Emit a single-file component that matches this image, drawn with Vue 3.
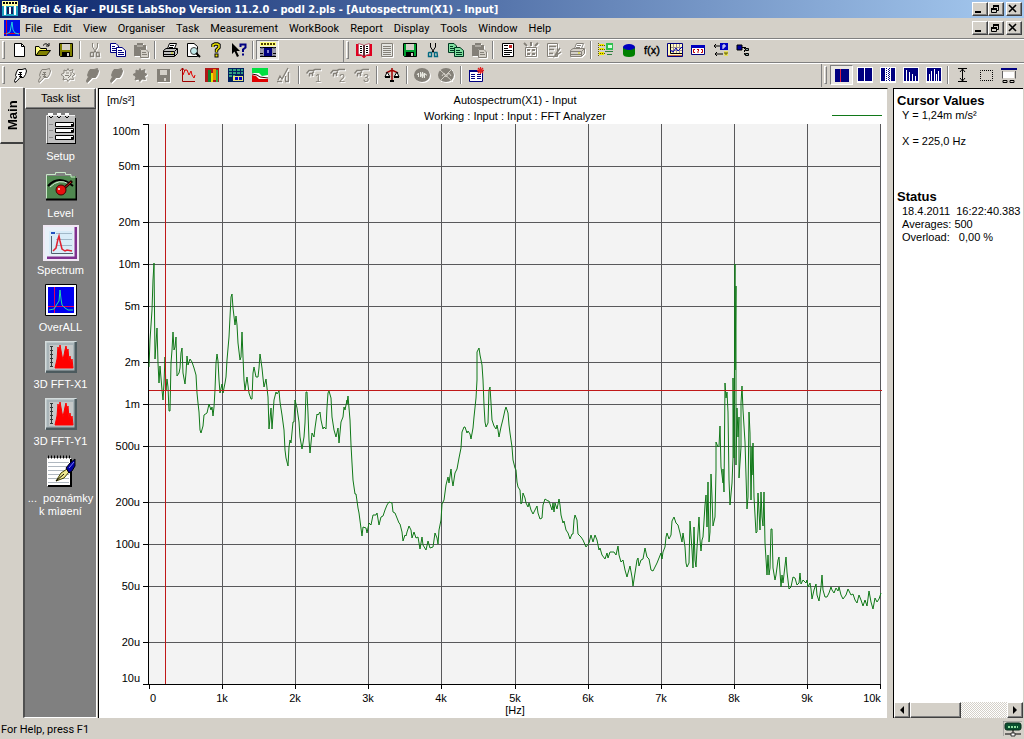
<template>
  <div class="window">

    <header class="titlebar">
      <svg class="icon" viewBox="0 0 16 16" v-html="icons.app"></svg>
      <h1>Brüel &amp; Kjar - PULSE LabShop Version 11.2.0 - podl 2.pls - [Autospectrum(X1) - Input]</h1>
      <div class="win-buttons">
        <button v-for="b in winButtons" :key="b" :class="['win-btn', b]" :aria-label="b">
          <svg viewBox="0 0 12 10" v-html="icons[b]"></svg>
        </button>
      </div>
    </header>

    <nav class="menubar">
      <svg class="icon" viewBox="0 0 16 16" v-html="icons.doc"></svg>
      <button v-for="m in menus" :key="m" class="menu-item">{{ m }}</button>
      <div class="win-buttons">
        <button v-for="b in winButtons" :key="b" :class="['win-btn', b]" :aria-label="b">
          <svg viewBox="0 0 12 10" v-html="icons[b]"></svg>
        </button>
      </div>
    </nav>

    <div v-for="(row, r) in toolbars" :key="r" :class="['toolbar', 'row-' + r]">
      <div v-for="(bar, i) in row" :key="i" class="bar">
        <span class="grip"></span>
        <template v-for="(name, k) in bar" :key="k">
          <span v-if="name === '|'" class="sep"></span>
          <button
            v-else
            :class="['tool', { off: disabled.includes(name), pressed: pressed.includes(name) }]"
            :aria-label="name"
          >
            <svg class="icon" viewBox="0 0 16 16" v-html="icons[name]"></svg>
          </button>
        </template>
      </div>
    </div>

    <main class="content">

      <div class="tabs">
        <button class="tab">Main</button>
      </div>

      <aside class="tasks">
        <button class="task-head">Task list</button>
        <button
          v-for="t in tasks"
          :key="t.label"
          :class="['task', { active: t.label === 'Spectrum' }]"
        >
          <svg class="task-icon" viewBox="0 0 32 32" v-html="icons[t.icon]"></svg>
          <span>{{ t.label }}</span>
        </button>
      </aside>

      <section class="pane chart-pane">
        <svg class="chart" viewBox="0 0 788 629">
          <text x="8" y="15">[m/s²]</text>
          <text x="416" y="15" text-anchor="middle">Autospectrum(X1) - Input</text>
          <text x="416" y="31" text-anchor="middle">Working : Input : Input : FFT Analyzer</text>
          <rect class="legend" x="733" y="26" width="50" height="1" />

          <g transform="translate(50 35)">
            <rect width="731" height="560" fill="#f3f3f3" />
            <g v-for="y in yTicks" :key="y.label">
              <path v-if="y.grid" class="grid" :d="`M0 ${y.pos}.5H731`" />
              <path class="axis" :d="`M-6 ${y.pos}.5H0`" />
              <text x="-9" :y="y.text" text-anchor="end">{{ y.label }}</text>
            </g>
            <g v-for="x in xTicks" :key="x.label">
              <path v-if="x.grid" class="grid" :d="`M${x.pos}.5 0V560`" />
              <path class="axis" :d="`M${x.pos}.5 560V565`" />
              <text :x="x.text" y="578" text-anchor="middle">{{ x.label }}</text>
            </g>
            <path class="axis" d="M-0.5 0V560.5H732" />
            <polyline class="trace" :points="trace" />
            <rect class="cursor" x="16" y="0" width="1" height="560" />
            <rect class="cursor" x="0" y="266" width="733" height="1" />
            <text x="366" y="590" text-anchor="middle">[Hz]</text>
          </g>
        </svg>
      </section>

      <section class="pane values-pane">
        <div class="values">
          <h2>Cursor Values</h2>
          <p>Y = 1,24m m/s²</p>
          <p class="x-value">X = 225,0 Hz</p>
          <h2>Status</h2>
          <p>18.4.2011&nbsp; 16:22:40.383</p>
          <p>Averages: 500</p>
          <p>Overload: &nbsp; 0,00 %</p>
        </div>
        <div class="scrollbar">
          <button class="arrow" aria-label="left"><svg viewBox="0 0 8 8"><path d="M6 0V8L2 4Z" /></svg></button>
          <div class="thumb"></div>
          <button class="arrow right" aria-label="right"><svg viewBox="0 0 8 8"><path d="M2 0V8L6 4Z" /></svg></button>
        </div>
      </section>

    </main>

    <footer class="statusbar">
      <span>For Help, press F1</span>
      <svg class="status-icon" viewBox="0 0 20 16">
        <path d="M0 15V0H19" fill="none" stroke="#808080" />
        <path d="M2 4Q2 2 4 2H16Q18 2 18 4V7Q18 9 16 9H4Q2 9 2 7Z" fill="#0a5030" stroke="#062c1a" />
        <path d="M5 6H15" stroke="#8fe0a0" stroke-width="2" stroke-dasharray="2 1" />
        <path d="M10 9V13M2 13H18" stroke="#000" />
        <path d="M8 12H12V15H8Z" fill="#fff" stroke="#333" />
      </svg>
    </footer>

  </div>
</template>

<script setup>
const winButtons = ["minimize", "restore", "close"]

const menus = [
  "File", "Edit", "View", "Organiser", "Task", "Measurement",
  "WorkBook", "Report", "Display", "Tools", "Window", "Help"
]

const toolbars = [
  [
    ["new", "open", "save", "|", "cut", "copy", "paste", "|", "print", "preview", "help", "whats", "|", "organiser"],
    [
      "book", "page", "saveGreen", "cutBlue", "copyGreen", "pasteOff", "|",
      "report", "reportAll", "reportEdit", "printOff", "|",
      "levels", "database", "func", "graph", "calib", "convert", "tree"
    ]
  ],
  [
    [
      "hand", "handOff", "burst", "handDark", "handDark2", "burst2", "saveOff", "autorange",
      "colors", "table", "profile", "sweep", "|", "hand1", "hand2", "hand3", "|",
      "balance", "|", "wave", "waveOff", "|", "properties"
    ],
    ["cursor", "cursor2", "cursorBand", "harmonic", "sideband", "|", "height", "select", "display"]
  ]
]

const disabled = [
  "cut", "paste", "page", "pasteOff", "reportAll", "reportEdit", "printOff", "handOff",
  "burst", "handDark", "handDark2", "burst2", "saveOff", "sweep", "hand1", "hand2", "hand3",
  "wave", "waveOff"
]

const pressed = ["organiser", "cursor"]

const tasks = [
  { icon: "setup", label: "Setup" },
  { icon: "level", label: "Level" },
  { icon: "spectrum", label: "Spectrum" },
  { icon: "overall", label: "OverALL" },
  { icon: "fft", label: "3D FFT-X1" },
  { icon: "fft", label: "3D FFT-Y1" },
  { icon: "notes", label: "...  poznámky k mìøení" }
]

// log axis, 140 px per decade from 100m down to 10u
const levels = [
  ["100m", 0.1], ["50m", 0.05], ["20m", 0.02], ["10m", 0.01], ["5m", 0.005],
  ["2m", 0.002], ["1m", 0.001], ["500u", 0.0005], ["200u", 0.0002],
  ["100u", 0.0001], ["50u", 0.00005], ["20u", 0.00002], ["10u", 0.00001]
]

const yTicks = levels.map(([label, value], i) => {
  const pos = Math.round(140 * Math.log10(0.1 / value))
  const first = i === 0
  const last = i === levels.length - 1
  return {
    label,
    pos,
    grid: !first && !last,
    text: first ? pos + 11 : last ? pos - 2 : pos + 4
  }
})

const xTicks = Array.from({ length: 11 }, (_, k) => {
  const pos = Math.round(73.1 * k)
  return {
    label: k ? k + "k" : "0",
    pos,
    grid: k > 0,
    text: k === 0 ? 4 : k === 10 ? pos - 8 : pos
  }
})

const trace = `
0,243 1,216 3,186 4,156 5,139 6,235 7,219 8,204 9,239 10,259 11,242 13,266 14,276 15,259 16,233 17,266
18,255 19,263 20,287 21,287 22,239 23,226 24,208 25,226 26,223 27,213 28,252 30,249 31,244 32,229 33,224
34,249 36,260 37,249 38,232 39,241 41,235 43,238 45,244 47,251 48,269 49,279 50,288 51,306 52,309 54,302
55,291 58,289 60,280 62,286 63,283 64,292 65,283 66,266 67,239 68,230 69,237 70,256 71,269 73,260 74,269
76,259 77,253 78,236 80,213 81,193 82,173 83,170 84,184 86,201 87,192 88,201 89,219 91,236 92,233 93,208
94,233 95,256 96,266 98,253 100,269 102,275 103,275 104,249 105,243 107,253 109,253 110,244 111,230
113,244 114,254 115,263 117,255 119,273 120,305 122,284 123,305 125,276 127,268 128,270 130,267 131,278
133,291 135,306 136,326 137,334 139,342 140,323 141,316 142,319 144,298 145,298 146,276 148,284 150,298
151,313 153,325 155,313 156,299 157,268 158,268 159,289 160,316 161,329 163,309 165,313 166,304 168,290
169,291 171,288 172,296 174,305 175,303 177,305 178,283 179,269 180,267 182,274 183,293 185,306 187,313
189,304 190,319 192,298 194,293 195,283 196,286 198,276 198,280 199,272 201,296 202,321 203,339 204,356
206,370 207,370 209,384 210,389 213,412 214,403 217,404 218,409 220,399 222,401 224,391 227,391 228,389
230,401 232,393 234,392 236,386 238,381 240,378 243,379 244,388 246,389 248,394 250,399 251,400 253,408
254,417 256,411 257,412 258,408 260,402 262,406 263,414 265,408 267,414 269,413 271,425 273,413 274,421
277,426 279,417 281,424 284,423 286,409 288,414 289,420 290,406 292,396 293,380 295,376 297,361 299,353
300,359 302,345 303,356 304,362 306,349 308,345 310,334 312,324 313,308 315,303 316,303 318,309 319,307
321,310 322,315 324,304 325,293 327,274 328,256 328,228 330,224 331,231 333,241 334,256 335,281 336,298
337,303 339,299 340,266 341,263 342,279 343,296 345,302 347,305 348,301 349,306 350,313 352,303 354,295
356,286 357,283 359,289 360,301 361,309 363,323 364,336 366,344 367,346 368,358 369,363 371,366 372,380
373,378 374,369 376,374 377,379 379,383 380,379 382,386 384,390 386,386 388,382 389,389 391,395 393,394
394,381 396,375 399,377 400,377 402,383 403,386 404,379 405,388 406,379 408,385 410,375 411,381 412,391
414,399 415,397 417,406 419,409 421,415 423,410 424,410 425,396 426,391 428,396 429,410 432,413 434,416
437,423 440,419 442,411 444,418 446,411 448,416 450,426 451,424 453,431 456,435 458,429 459,434 461,428
465,428 467,431 469,422 470,431 472,438 474,436 476,446 478,453 479,449 481,442 483,453 484,462 486,449
488,436 489,434 490,442 492,436 494,435 496,424 498,433 500,435 502,446 504,447 506,443 508,439 510,434
512,429 513,435 514,428 516,423 517,413 518,409 520,415 522,411 523,397 525,393 527,399 529,401 531,409
533,418 534,409 536,423 537,439 538,443 540,439 541,397 543,426 544,444 545,403 546,436 547,443 548,424
550,393 551,416 552,427 553,416 554,413 556,381 557,371 558,403 559,358 560,418 561,408 562,350 563,373
564,402 566,393 567,346 567,318 569,323 570,322 571,302 572,343 574,359 574,345 575,368 576,259 577,274
578,268 579,288 580,356 581,381 583,359 584,334 584,254 585,334 586,140 586,246 587,162 587,341 588,284
589,313 590,293 590,354 592,323 592,279 593,262 594,286 596,318 598,385 599,373 600,288 601,309 602,376
603,323 603,351 604,319 605,373 607,409 608,408 609,369 611,406 612,368 613,393 614,402 615,368 616,419
618,451 619,431 620,451 621,444 622,405 623,405 624,444 626,456 627,451 629,436 630,433 632,463 633,451
634,459 637,433 638,448 640,465 642,463 644,453 646,454 648,461 650,459 651,449 652,460 654,456 657,459
658,456 659,463 661,459 662,465 663,475 665,466 667,460 668,471 670,477 672,463 673,451 674,466 676,473
678,473 680,469 682,463 683,466 685,469 687,464 689,467 690,463 692,471 694,475 697,471 699,465 702,471
704,470 706,476 708,479 710,471 712,476 714,482 716,476 718,482 720,467 722,478 724,485 726,474 728,478
730,475 732,469`

const floppy = (body) =>
  `<path d="M1.5 1.5H14.5V14.5H2.5L1.5 13.5Z" fill="${body}" stroke="#000"/><path d="M4 2H12V8H4Z" fill="#d4d0c8"/><path d="M4 10H12V15H4Z" fill="#000"/><path d="M9 11H11V14H9Z" fill="#d4d0c8"/>`

const pages = (fill, line) =>
  `<path d="M.5 1.5H6L8.5 4V10.5H.5Z" fill="${fill}" stroke="${line}"/><path d="M2 4.5H5M2 6.5H7M2 8.5H6" stroke="${line}"/><path d="M6.5 5.5H12L15.5 8.5V14.5H6.5Z" fill="${fill}" stroke="${line}"/><path d="M8 8.5H12M8 10.5H14M8 12.5H14" stroke="${line}"/>`

const scissors = (blade, ring) =>
  `<path d="M5.5 1V5L9.5 11M10.5 1V5L6.5 11" fill="none" stroke="${blade}"/><path d="M4 10.5H6.5V14.5H3.5V11ZM9.5 10.5H12L12.5 14.5H9.5Z" fill="none" stroke="${ring}" stroke-width="1.4"/>`

const clipboard =
  '<path d="M1 3H4V1H10V3H13V7H7V14H1Z" fill="#848078"/><path d="M4 4H10" stroke="#d4d0c8"/><path d="M7.5 7.5H13L15.5 10V15.5H7.5Z" fill="#d4d0c8" stroke="#848078"/><path d="M9 10.5H13M9 12.5H14" stroke="#848078"/>'

const printer = (line, tray) =>
  `<path d="M5.5 6.5L7.5 1.5H14.5L12.5 6.5" fill="#fff" stroke="${line}"/><path d="M8 3.5H12M7 5.5H11" stroke="${line}"/><path d="M1.5 8.5L4 6.5H15.5V11.5L12.5 14.5H1.5Z" fill="${tray}" stroke="${line}"/><path d="M2 9.5H12.5L15 7M2 12.5H12M12.5 10V14" fill="none" stroke="${line}"/><path d="M9 11H11" stroke="#dd0"/>`

const hand = (fill, line) =>
  `<path d="M6 2.5H10L13.5 1.5L14.5 4L13.5 7.5L11.5 10.5H8L5.5 13.5L3 15.5L2.5 13.5L4.5 10L3.5 8.5L4.5 5Z" fill="${fill}" stroke="${line}"/><path d="M7 5.5H10M6 7.5H10M7 9.5H10M8.5 5V10" stroke="${line}" fill="none"/>`

const handNum = (n) =>
  `<path d="M0.5 6.5L3 3.5H7L9 2.5H15M3 6.5H6L8 4.5M3.5 6V9.5M6.5 6V9" fill="none" stroke="#848078" stroke-width="1.5"/><text x="9" y="15" font-family="Liberation Sans, sans-serif" font-size="11" fill="#848078">${n}</text>`

const burst = (fill) =>
  `<path d="M8 1.5L9.5 4L13 2.5L12.5 5.5L15 7.5L12.5 9L13.5 12.5L10 12L8 14.5L6.5 12L3 13L4 10L1 7.5L4 6L4 3L6.5 4Z" fill="${fill}" stroke="#848078"/><path d="M6 6H9M5 8.5H9M8 11L11 8V5" fill="none" stroke="#848078"/>`

const fft =
  '<path d="M0 0H32V32H0Z" fill="#a8b4b8"/><path d="M0 31V0H31" fill="none" stroke="#d4dcdc" stroke-width="3"/><path d="M31 1V31H1" fill="none" stroke="#4c5a5e" stroke-width="3"/><path d="M4 4H28V28H4Z" fill="#c4c8c8"/><path d="M6.5 5V26M5 5.5H8M5 9.5H8M5 13.5H8M5 17.5H8M5 21.5H8M5 25.5H8" stroke="#303838"/><path d="M10 27L12 18L13 6L14 12L15 4L17 15L18 19L20 9L21 5L22 11L23 8L24 20L25 15L26 22L27 18L28 27Z" fill="#f00" stroke="#f00"/>'

const icons = {
  app: '<path d="M0 0H16V5H0Z" fill="#ffffa0"/><path d="M1 2H15" stroke="#000" stroke-dasharray="2 1" stroke-width="2"/><path d="M0 5H16V15H0Z" fill="#20a0c0"/><path d="M2 5H4V14H2ZM12 5H14V14H12Z" fill="#fff"/><path d="M5 6H11V13H5Z" fill="#102060"/><path d="M7 6H9V13H7Z" fill="#fff"/>',
  doc: '<path d="M0 0H16V16H0Z" fill="#0010e8"/><path d="M2.5 0V16M0 13.5H16" stroke="#d00030"/><path d="M2 14L6 12L8 2L9 10L11 13L15 14" fill="none" stroke="#20d0e0"/>',
  minimize: '<path d="M2 7H8V9H2Z"/>',
  restore: '<path d="M4 1H10V3H4Z"/><path d="M4.5 1V4M9.5 1V6.5H8M2.5 5V8.5H7.5V4" fill="none" stroke="#000"/><path d="M2 4H8V6H2Z"/>',
  close: '<path d="M2 1L9 8M9 1L2 8" stroke="#000" stroke-width="1.6"/>',
  new: '<path d="M2.5 1.5H9.5L12.5 4.5V14.5H2.5Z" fill="#fff" stroke="#000"/><path d="M9.5 1.5V4.5H12.5" fill="none" stroke="#000"/>',
  open: '<path d="M.5 13.5V4.5H4L5.5 6.5H11.5V8" fill="#ffff80" stroke="#000"/><path d="M1 13.5L4.5 8.5H15.5L11.5 13.5Z" fill="#808000" stroke="#000"/><path d="M8 3.5Q11 0 13.5 3.5M14 1V4H11" fill="none" stroke="#000"/>',
  save: floppy("#808000"),
  cut: scissors("#848078", "#848078"),
  copy: pages("#fff", "#000080"),
  paste: clipboard,
  print: printer("#000", "#c0c0c0"),
  preview: '<path d="M2.5 1.5H9L12.5 4.5V14.5H2.5Z" fill="#fff" stroke="#000"/><circle cx="9" cy="9" r="3.5" fill="#c0e8e8" stroke="#404040"/><path d="M11 11L15 15" stroke="#000" stroke-width="2"/>',
  help: '<path d="M5 5V3L7 2H9.5L11 3V5.5L8.5 8V10.5" fill="none" stroke="#000" stroke-width="3.4"/><path d="M6.5 11.5H10.5V15.5H6.5Z"/><path d="M5 5V3L7 2H9.5L11 3V5.5L8.5 8V10" fill="none" stroke="#e8e000" stroke-width="1.6"/><path d="M7.5 12.5H9.5V14.5H7.5Z" fill="#e8e000"/>',
  whats: '<path d="M1 1V12L3.5 9.5L6 15L8 14L5.5 9H9Z"/><path d="M9.5 5V2.5H14.5V5.5L12 7.5V10M12 11.5V13.5" fill="none" stroke="#000080" stroke-width="2"/>',
  organiser: '<path d="M0 0H16V4H0Z" fill="#ffff80"/><path d="M1 2H15" stroke="#504000" stroke-width="2" stroke-dasharray="2 1"/><path d="M0 5.5H16" stroke="#000"/><path d="M1 6H3V14H1ZM13 6H15V14H13Z" fill="#fff" stroke="#404060"/><path d="M4 6H12V14H4Z" fill="#000080"/><path d="M7 8H9V11H7Z" fill="#8080d0"/><path d="M0 11.5H3M13 11.5H16M0 14.5H16" stroke="#000"/>',
  book: '<path d="M1 2V13H6L8 15L10 13H15V2" fill="none" stroke="#e00020" stroke-width="2"/><path d="M2.5 1.5L7.5 3V13.5L2.5 12ZM8.5 3L13.5 1.5V12L8.5 13.5Z" fill="#fff" stroke="#c06070"/><path d="M8 3V14" stroke="#000"/><path d="M4 4.5H6M4 6.5H6M4 8.5H6M4 10.5H6M10 4.5H12M10 6.5H12M10 8.5H12M10 10.5H12" stroke="#000"/>',
  page: '<path d="M2.5 1.5H13.5V14.5H2.5Z" fill="#e4e4e0" stroke="#848078"/><path d="M4 4.5H12M4 6.5H12M4 8.5H12M4 10.5H12M4 12.5H12" stroke="#848078"/>',
  saveGreen: floppy("#00a030"),
  cutBlue: scissors("#000", "#006880"),
  copyGreen: pages("#80e0a0", "#003820"),
  pasteOff: clipboard,
  report: '<path d="M2.5 1.5H13.5V14.5H2.5Z" fill="#fff" stroke="#000"/><path d="M4 3.5H8M4 6.5H8M4 8.5H12M4 10.5H12M4 12.5H10" stroke="#000"/><path d="M9 3H12V6H9Z" fill="#c02020"/>',
  reportAll: '<path d="M1 1L4 4M8 0V4M15 1L12 4" stroke="#848078" stroke-width="2"/><path d="M2.5 5.5H13.5V14.5H2.5Z" fill="none" stroke="#848078"/><path d="M4 8H7M9 8H12M4 12H7M9 12H12" stroke="#848078" stroke-width="2"/>',
  reportEdit: '<path d="M1.5 1.5H11.5V14.5H1.5Z" fill="none" stroke="#848078"/><path d="M3 4.5H10M3 7.5H8M3 11.5H7M14 6L10 12L9 14L15 10" fill="none" stroke="#848078" stroke-width="1.5"/>',
  printOff: printer("#848078", "#d4d0c8"),
  levels: '<path d="M1 2H6V4H1ZM1 6H6V8H1ZM1 10H6V13H1Z" fill="#f0e800"/><path d="M.5 1V14M2 3.5H8M2 7.5H8M2 11.5H8" stroke="#605800" fill="none" stroke-dasharray="1 1"/><path d="M8 1H15V8H8Z" fill="#30c050"/><path d="M10 3H14V6H10Z" fill="#d8ffe0"/><path d="M7 9.5H15M9 12.5H14" stroke="#308040"/>',
  database: '<path d="M2 5V12Q2 15 8 15T14 12V5Z" fill="#008000"/><ellipse cx="8" cy="5" rx="6" ry="3" fill="#0000c0"/>',
  func: '<text x="0" y="12" font-family="Liberation Sans, sans-serif" font-size="11" fill="#000" stroke="#000" stroke-width=".4">f(x)</text>',
  graph: '<path d="M.5 1.5H15.5V14.5H.5Z" fill="#fff8c0" stroke="#000080"/><path d="M3.5 2V11M6.5 2V11M9.5 2V11M12.5 2V11M3 5.5H15M3 8.5H15" fill="none" stroke="#a09090"/><path d="M3.5 2V11.5H15" fill="none" stroke="#000"/><path d="M3 8L6 10L9 6L11 9L15 5" fill="none" stroke="#0000c0"/><path d="M1 13.5H15" stroke="#c06040"/>',
  calib: '<path d="M1.5 4H14.5V12.5H1.5Z" fill="#fff" stroke="#000080"/><path d="M1 3H15V6H1Z" fill="#0000c0"/><path d="M5 7.5H3.5V10.5H5M11 7.5H12.5V10.5H11M7 8L8 7L9 8L8 9V11" fill="none" stroke="#c00000"/>',
  convert: '<path d="M1 4H7M3 2L1 4L3 6M2 12H10M4 10L2 12L4 14" fill="none" stroke="#000"/><path d="M7 1H15V8H7Z" fill="#0000c0"/><path d="M10 7V3H12V5H10" fill="none" stroke="#fff"/><path d="M11 9H15V14H11Z" fill="#e8e060"/><path d="M12 10V12H14V10" fill="none" stroke="#606000"/>',
  tree: '<path d="M1 3H6V8H1Z" fill="#0000a0" stroke="#000"/><path d="M6 5.5H10M8.5 5V12.5H10" fill="none" stroke="#000" stroke-dasharray="2 1"/><path d="M9.5 6.5H12.5V8.5H9.5ZM9.5 11.5H12.5V13.5H9.5Z" fill="#80a0a0" stroke="#000"/>',
  hand: hand("#fff", "#000"),
  handOff: hand("#d4d0c8", "#848078"),
  burst: burst("#e8e6e0"),
  handDark: hand("#848078", "#848078"),
  handDark2: hand("#848078", "#848078"),
  burst2: burst("#848078"),
  saveOff: '<path d="M1 2H14V15H1Z" fill="#848078"/><path d="M4 3H11V8H4Z" fill="#d4d0c8"/><path d="M8 11H10V14H8Z" fill="#d4d0c8"/>',
  autorange: '<path d="M2.5 1V14.5H15M0 4L2.5 1L5 4" fill="none" stroke="#a00000"/><path d="M3 8L5 3H7L9 8L11 4L12 8L14 11L15 8" fill="none" stroke="#e00000"/>',
  colors: '<path d="M1 1H15V15H1Z" fill="#b01818"/><path d="M4 3H7V15H4Z" fill="#108030"/><path d="M7 6H9V15H7Z" fill="#e8e000"/><path d="M9 2H12V13H9Z" fill="#e89000"/><path d="M12 3H14V15H12Z" fill="#30b040"/>',
  table: '<path d="M0 1H16V15H0Z" fill="#002060"/><path d="M1 3H15M1 6H15M1 9H7" stroke="#30a080" stroke-width="2" stroke-dasharray="3 1"/><path d="M5 9H15V14H5Z" fill="#e8e080"/><path d="M7 10H10V13H7ZM11 10H14V13H11Z" fill="#0000c0"/>',
  profile: '<path d="M0 1H16V15H0Z" fill="#fff"/><path d="M0 1H16V8L10 9L7 6H0Z" fill="#00e040"/><path d="M0 8L4 9L7 12H16V15H0Z" fill="#e00000"/><path d="M0 7L5 8L8 10L16 11" fill="none" stroke="#300000"/>',
  sweep: '<path d="M2 13L4 9L6 12L12 1M9.5 9V14M12.5 5V14M1 14.5H6M9 14.5H13" fill="none" stroke="#848078" stroke-width="1.3"/>',
  hand1: handNum(1),
  hand2: handNum(2),
  hand3: handNum(3),
  balance: '<path d="M8 1V14M2 6L8 3L14 6" fill="none" stroke="#a00000" stroke-width="1.5"/><path d="M1 10L3 5L6 10ZM10 10L13 5L15 10Z" fill="#fff" stroke="#000"/><path d="M1 10H6M10 10H15M6 14H10" stroke="#000" stroke-width="2"/>',
  wave: '<ellipse cx="8" cy="8" rx="8" ry="7" fill="#848078"/><path d="M3 8L4.5 6V10M6.5 10V5L8.5 11V5L10.5 11V6L12 8H13" fill="none" stroke="#e8e8e0"/>',
  waveOff: '<ellipse cx="8" cy="8" rx="8" ry="7" fill="#848078"/><path d="M2 3L14 14M14 2L2 14M4 9L6 6L8 10L11 6L13 9" fill="none" stroke="#d4d0c8"/>',
  properties: '<path d="M1.5 3.5H14.5V14.5H1.5Z" fill="#fff" stroke="#000080"/><path d="M1 3H15V5H1Z" fill="#000080"/><path d="M3 7.5H7M3 9.5H7M3 11.5H7M9 7.5H13M9 9.5H13M9 11.5H13" stroke="#000080"/><path d="M10 1L15 6M15 1L10 6M9 3.5H16M12.5 0V7" stroke="#e02020" stroke-width="1.3"/>',
  cursor: '<path d="M1 2H15V15H1Z" fill="#000080"/><path d="M6.5 2V15" stroke="#e02040"/>',
  cursor2: '<path d="M0 0H16V16H0Z" fill="#fff"/><path d="M1 1H15V14H1Z" fill="#000080"/><path d="M7.5 1V14" stroke="#fff"/>',
  cursorBand: '<path d="M0 0H16V16H0Z" fill="#fff"/><path d="M1 1H5V14H1ZM11 1H15V14H11Z" fill="#000080"/><path d="M6.5 1V14M8.5 2V14M9.5 1V14" stroke="#000080" stroke-dasharray="1 1"/>',
  harmonic: '<path d="M0 0H16V16H0Z" fill="#fff"/><path d="M1 1H15V14H1Z" fill="#000080"/><path d="M3.5 3V14M6.5 5V14M9.5 7V14M12.5 9V14" stroke="#fff"/>',
  sideband: '<path d="M0 0H16V16H0Z" fill="#fff"/><path d="M1 1H15V14H1Z" fill="#000080"/><path d="M3.5 7V14M5.5 4V14M8.5 2V14M10.5 7V14M12.5 4V14" stroke="#fff"/>',
  height: '<path d="M3 1.5H12M3 14.5H12M7.5 2V14M5 5L7.5 2L10 5M5 11L7.5 14L10 11" fill="none" stroke="#000"/>',
  select: '<path d="M2.5 3.5H14.5V13.5H2.5Z" fill="none" stroke="#000" stroke-dasharray="1 1" stroke-dashoffset=".5"/>',
  display: '<path d="M0 1H16V3H0Z" fill="#000080"/><path d="M1.5 4.5H13.5V11.5H1.5Z" fill="#fff" stroke="#d4d0c8"/><path d="M1.5 4V11.5M14.5 4V11.5" stroke="#606060"/><path d="M2 13.5H6V15.5H2ZM9 13.5H13V15.5H9Z" fill="none" stroke="#000"/>',
  setup: '<path d="M3 3H30V30H3Z" fill="#c0c0c0"/><path d="M1.5 30V2.5H30" fill="none" stroke="#f0f0f0"/><path d="M2 30.5H31M30.5 5V30" stroke="#000"/><path d="M4 3L6 5L8 3M12 3L14 5L16 3M20 3L22 5L24 3" fill="none" stroke="#000"/><path d="M3 1H8M12 1H16M20 1H24" stroke="#fff" stroke-width="2"/><path d="M10.5 9.5H28.5V13.5H10.5ZM10.5 15.5H28.5V19.5H10.5ZM10.5 22.5H28.5V26.5H10.5Z" fill="#fff" stroke="#000"/><path d="M26 12H29M26 18H29M26 25H29" stroke="#000" stroke-width="2"/><path d="M4 11.5H8M4 17.5H8M4 24.5H8" stroke="#909090"/>',
  level: '<path d="M1 6H31V29H1Z" fill="#508850"/><path d="M1.5 29V4.5H10.5V2.5H20.5V4.5H26V7H30" fill="none" stroke="#c8e8c8"/><path d="M1 29.5H31.5V8" fill="none" stroke="#000" stroke-width="2"/><path d="M3 16Q14 4 28 16" fill="none" stroke="#000" stroke-width="2"/><path d="M5 17Q14 8 24 14" fill="none" stroke="#d8f0d8"/><path d="M16 21L27 11" stroke="#200" stroke-width="3"/><path d="M16 21L26 12" stroke="#d02020"/><circle cx="16" cy="20" r="5" fill="#e81010" stroke="#400"/><circle cx="14" cy="19" r="1" fill="#fff"/>',
  spectrum: '<path d="M0 0H32V32H0Z" fill="#e8f0f8"/><path d="M31 0V31H2" fill="none" stroke="#803090" stroke-width="3"/><path d="M4 4H28V27H4Z" fill="#d8ecf8"/><path d="M6 6H10" stroke="#2050c0" stroke-width="2"/><path d="M11 6.5H27M11 12.5H27M11 18.5H27" stroke="#a0b8c8"/><path d="M6.5 9V26.5H28" fill="none" stroke="#506070"/><path d="M8 24L11 21L13 12L14 9L15 14L17 22L20 24L22 23L27 24" fill="none" stroke="#e02030" stroke-width="1.5"/>',
  overall: '<path d="M.5 .5H31.5V31.5H.5Z" fill="#fff" stroke="#000"/><path d="M3 3H29V29H3Z" fill="#0000f0"/><path d="M9.5 3V29M3 22.5H29" stroke="#e00060"/><path d="M4 26L9 25L12 20L14 17L15 6L16 15L17 21L20 24L23 26H28" fill="none" stroke="#20e0a0"/>',
  fft,
  notes: '<path d="M2 3H26V31H2Z" fill="#fff"/><path d="M26 4V31H3" fill="none" stroke="#000" stroke-width="2"/><path d="M3 2H26" stroke="#000" stroke-width="3" stroke-dasharray="1 2"/><path d="M3 7.5H24M3 11.5H24M3 15.5H24M3 19.5H24M3 23.5H24M3 27.5H24" stroke="#b0b8c0"/><path d="M11 26L16 18L22 14L24 17L19 23Z" fill="#f0e890" stroke="#404000"/><path d="M11 26L19 19" stroke="#000"/><path d="M21 13L25 8L30 4V11L27 16L24 18Z" fill="#0000a0" stroke="#000"/><path d="M24 13L29 7" stroke="#8080ff"/>'
}
</script>

<style>
body{
  margin:0;
  background:#d4d0c8;
}
</style>

<style scoped>

*{
  box-sizing:border-box;
}

.window{
  min-height:100vh;
  display:flex;
  flex-direction:column;
  background:#d4d0c8;
  color:#000;
  font-family:"Liberation Sans", Arial, sans-serif;
  font-size:11px;
  line-height:13px;
}

button{
  font:inherit;
  color:inherit;
  background:#d4d0c8;
  border:0;
  padding:0;
}

.icon{
  display:block;
  width:16px;
  height:16px;
  flex:none;
}

.titlebar{
  height:18px;
  display:flex;
  align-items:center;
  gap:2px;
  padding:0 2px;
  background:linear-gradient(to right, #0a246a, #a6caf0);
}

.titlebar h1{
  margin:0;
  font-family:"DejaVu Sans Condensed", "DejaVu Sans", sans-serif;
  font-stretch:condensed;
  font-size:11px;
  font-weight:bold;
  color:#fff;
  white-space:nowrap;
}

.win-buttons{
  display:flex;
  margin-left:auto;
}

.win-btn{
  width:16px;
  height:14px;
  border:1px solid;
  border-color:#fff #404040 #404040 #fff;
  box-shadow:inset -1px -1px 0 #808080;
}

.win-btn svg{
  display:block;
  width:12px;
  height:10px;
}

.win-btn.close{
  margin-left:2px;
}

.menubar{
  height:21px;
  display:flex;
  align-items:center;
  gap:11px;
  padding:0 2px 0 4px;
  border-bottom:1px solid #808080;
  font-family:Roboto, sans-serif;
}

.menubar .icon{
  margin-right:-6px;
}

.toolbar{
  height:24px;
  display:flex;
  border-top:1px solid #fff;
  border-bottom:1px solid #808080;
}

.row-1{
  border-bottom:0;
}

.bar{
  display:flex;
  align-items:center;
  padding-left:2px;
  padding-bottom:2px;
}

.row-0 .bar:first-child{
  width:344px;
  border-right:1px solid #808080;
}

.row-1 .bar:last-child{
  margin-left:auto;
  padding-right:4px;
  border-left:1px solid #808080;
}

.grip{
  width:3px;
  height:18px;
  margin-right:3px;
  border:1px solid;
  border-color:#fff #808080 #808080 #fff;
}

.sep{
  width:2px;
  height:18px;
  margin:0 2px;
  border-left:1px solid #808080;
  border-right:1px solid #fff;
}

.tool{
  width:23px;
  height:20px;
  display:flex;
  align-items:center;
  justify-content:center;
}

.row-1 .bar:first-child .tool{
  width:24px;
}

.tool.off .icon{
  filter:drop-shadow(1px 1px 0 #fff);
}

.tool.pressed{
  border:1px solid;
  border-color:#808080 #fff #fff #808080;
  background:#ebe9e4;
}

.content{
  flex:1;
  display:flex;
  padding-bottom:1px;
}

.tabs{
  width:23px;
}

.tab{
  width:23px;
  height:57px;
  border-top:2px solid #404040;
  border-bottom:1px solid #fff;
  border-right:1px solid #fff;
  font-size:13px;
  font-weight:bold;
  writing-mode:vertical-rl;
  transform:rotate(180deg);
}

.tasks{
  width:74px;
  display:flex;
  flex-direction:column;
  border-left:2px solid #505050;
  border-right:1px solid #fff;
  border-bottom:1px solid #fff;
  background:#808080;
  margin-top:1px;
}

.task-head{
  height:21px;
  margin-bottom:4px;
  border:1px solid;
  border-color:#fff #404040 #404040 #fff;
  box-shadow:inset -1px -1px 0 #808080;
}

.task{
  min-height:57px;
  display:flex;
  flex-direction:column;
  align-items:center;
  gap:5px;
  background:none;
  color:#fff;
}

.task span{
  white-space:pre-wrap;
}

.task-icon{
  width:32px;
  height:32px;
  flex:none;
}

.task.active .task-icon{
  outline:2px solid #f0e8f4;
}

.pane{
  background:#fff;
  border-top:1px solid #000;
  border-left:1px solid #000;
  margin-top:1px;
}

.chart-pane{
  flex:1;
  min-width:0;
  margin-left:1px;
  border-right:1px solid #d4d0c8;
}

.chart{
  display:block;
  width:100%;
  height:auto;
}

.chart text{
  font-size:11px;
}

.grid,
.axis,
.trace{
  fill:none;
  stroke-width:1;
}

.grid,
.axis,
.cursor,
.legend{
  shape-rendering:crispEdges;
}

.grid{
  stroke:#58585a;
}

.axis{
  stroke:#000;
}

.cursor{
  fill:#c01818;
}

.trace{
  stroke:#107818;
}

.legend{
  fill:#107818;
}

.values-pane{
  width:130px;
  margin-left:5px;
  margin-right:1px;
  display:flex;
  flex-direction:column;
}

.values{
  flex:1;
  padding:3px 0 0 3px;
  white-space:nowrap;
}

.values h2{
  margin:0;
  font-size:13px;
  line-height:17px;
}

.values p{
  margin:0;
  padding-left:5px;
}

.values .x-value{
  margin:13px 0 40px;
}

.scrollbar{
  height:16px;
  display:flex;
  background:repeating-conic-gradient(#fff 0 25%, #d4d0c8 0 50%) 0 0 / 2px 2px;
}

.arrow,
.thumb{
  width:16px;
  border:1px solid;
  border-color:#fff #404040 #404040 #fff;
  box-shadow:inset -1px -1px 0 #808080;
  background:#d4d0c8;
}

.arrow svg{
  display:block;
  width:8px;
  height:8px;
  margin:0 auto;
}

.thumb{
  width:51px;
}

.arrow.right{
  margin-left:auto;
}

.statusbar{
  height:20px;
  display:flex;
  align-items:center;
  justify-content:space-between;
  padding:0 1px;
  font-family:Roboto, sans-serif;
}

.status-icon{
  width:20px;
  height:16px;
}

</style>
